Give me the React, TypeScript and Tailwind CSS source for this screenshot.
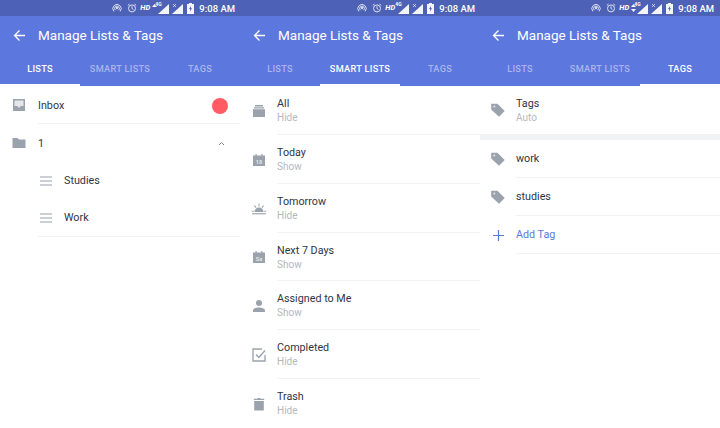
import { ReactNode } from 'react';

const tabs = ['LISTS', 'SMART LISTS', 'TAGS'];

type Arrows = 'up' | 'both' | 'none';

function Icon({ children, size = 16 }: { children: ReactNode; size?: number }) {
  return (
    <svg width={size} height={size} viewBox="0 0 16 16" fill="#9aa2ad" className="shrink-0">
      {children}
    </svg>
  );
}

function Slot({ children }: { children: ReactNode }) {
  return <div className="w-[16px] shrink-0 flex justify-center">{children}</div>;
}

const InboxIcon = () => (
  <Icon>
    <path d="M2 2h12v12H2z" />
    <path d="M3.500 3.500h9v5.500h-2.600L8 11 6.100 9H3.500z" fill="#e4e6ea" />
  </Icon>
);
const FolderIcon = () => (
  <Icon>
    <path d="M1.500 3h5l1.500 1.600h6.500V13h-13z" />
  </Icon>
);
const MenuIcon = () => (
  <svg width="14" height="12" viewBox="0 0 14 12" className="shrink-0" stroke="#9aa2ad" strokeWidth="1.2">
    <path d="M1 2h12M1 6h12M1 10h12" />
  </svg>
);
const AllIcon = () => (
  <Icon>
    <path d="M4 2h8v1.400H4zM3 4.200h10v1.300H3zM2 6.300h12V14H2z" />
  </Icon>
);
const CalIcon = ({ label }: { label: string }) => (
  <Icon>
    <path d="M2 3.500h2.500V2h1.200v1.500h4.600V2h1.200v1.500H14V14H2z" />
    <text x="8" y="11.500" textAnchor="middle" fontSize="5.500" fill="#e4e6ea" fontFamily="Roboto, sans-serif" fontWeight="700">
      {label}
    </text>
  </Icon>
);
const SunIcon = () => (
  <Icon>
    <path d="M3.500 11a4.500 4.500 0 0 1 9 0z" />
    <path d="M1 12.200h14v1.100H1z" />
    <path d="M7.500 2.500h1v3h-1zM3 5l.8-.7 1.700 1.900-.8.7zM13 5l-.8-.7-1.700 1.900.8.7zM.8 9.700h2v1h-2zM13.200 9.700h2v1h-2z" />
  </Icon>
);
const PersonIcon = () => (
  <Icon>
    <circle cx="8" cy="5" r="3" />
    <path d="M2 14v-1.600C2 10.400 5.500 9.400 8 9.400s6 1 6 3V14z" />
  </Icon>
);
const CheckIcon = () => (
  <svg width="16" height="16" viewBox="0 0 16 16" fill="none" stroke="#9aa2ad" strokeWidth="1.300" className="shrink-0">
    <path d="M14 8v6H2V2h9" />
    <path d="M5 7.500l2.800 3L14 3.500" />
  </svg>
);
const TrashIcon = () => (
  <Icon>
    <path d="M3.200 5h9.600v9.500H3.200zM2.800 2.800h3.400l.7-.8h2.200l.7.8h3.400v1.200H2.800z" />
  </Icon>
);
const TagIcon = () => (
  <Icon>
    <path d="M1.500 2.500h6.200L15 9.800 9.300 15.500 1.500 8.200z" transform="translate(-0.300 -0.800)" />
    <circle cx="4.300" cy="4.400" r="1" fill="#e4e6ea" />
  </Icon>
);
const PlusIcon = () => (
  <svg width="11" height="11" viewBox="0 0 11 11" stroke="#5c77dd" strokeWidth="1.200" className="shrink-0">
    <path d="M5.500 0v11M0 5.500h11" />
  </svg>
);

function StatusBar({ arrows, right }: { arrows: Arrows; right: string }) {
  return (
    <div className={`h-[16px] bg-[#4d62b6] flex items-center justify-end text-white ${right}`}>
      <svg width="10" height="10" viewBox="0 0 12 12" fill="none" stroke="#e8ebf7" strokeWidth="1.100">
        <path d="M2.200 10a5 5 0 1 1 7.600 0M3.900 8.600a2.900 2.900 0 1 1 4.200 0" />
        <circle cx="6" cy="6" r="1" fill="#e8ebf7" />
      </svg>
      <svg width="10" height="10" viewBox="0 0 12 12" fill="none" stroke="#e8ebf7" strokeWidth="1.100" className="ml-[5px]">
        <circle cx="6" cy="6.500" r="4.200" />
        <path d="M6 4v2.700l1.700 1M1 2.800l2-1.600M11 2.800L9 1.200" />
      </svg>
      <span className="ml-[3px] w-[10px] text-[7.500px] font-bold italic leading-none">HD</span>
      {arrows === 'none' ? (
        <span className="w-[3px]" />
      ) : (
        <span className="w-[8px] pl-[2px] flex">
          <svg width="5" height="8" viewBox="0 0 5 8" fill="#f4f5fb">
            <path d="M2.500 0L5 3H0z" />
            {arrows === 'both' && <path d="M2.500 8L0 5h5z" />}
          </svg>
        </span>
      )}
      <div className="relative">
        <svg width="11" height="11" viewBox="0 0 11 11" fill="#f4f5fb" className="block">
          <path d="M11 1v10H0z" />
        </svg>
        <span className="absolute left-[-3px] top-[-1px] text-[5px] font-bold leading-none">4G</span>
      </div>
      <svg width="11" height="11" viewBox="0 0 11 11" fill="#f4f5fb" className="ml-[3px]">
        <path d="M11 1v10H0z" />
        <path d="M1 1l3 3M4 1L1 4" stroke="#f4f5fb" strokeWidth="0.700" />
      </svg>
      <svg width="7" height="11" viewBox="0 0 7 11" className="ml-[4px]">
        <path d="M2 0h3v1h2v10H0V1h2z" fill="#f4f5fb" />
        <path d="M4 3L2 6h1.200L3 8.500 5 5.200H3.800z" fill="#4d62b6" />
      </svg>
      <span className="ml-[5px] pt-[1px] text-[9.500px] font-medium leading-none">9:08 AM</span>
    </div>
  );
}

function Header({ active, arrows, inset, right }: { active: number; arrows: Arrows; inset: string; right: string }) {
  return (
    <div className="bg-[#5c77dd] shrink-0">
      <StatusBar arrows={arrows} right={right} />
      <div className={`h-[38px] flex items-center pt-[1px] text-white ${inset}`}>
        <svg width="13" height="13" viewBox="0 0 13 13" fill="none" stroke="#ffffff" strokeWidth="1.300">
          <path d="M12 6.500H1.500M6.500 1.500l-5 5 5 5" />
        </svg>
        <span className="ml-[12px] text-[13.5px] leading-none">Manage Lists &amp; Tags</span>
      </div>
      <div className="flex h-[32px]">
        {tabs.map((tab, i) => (
          <div
            key={tab}
            className={`flex-1 flex items-center justify-center border-b-[2px] text-[9.2px] font-medium tracking-[0.3px] ${
              i === active ? 'text-white border-white' : 'text-[#a9b6ec] border-transparent'
            }`}
          >
            {tab}
          </div>
        ))}
      </div>
    </div>
  );
}

function Row({ icon, title, sub, height, last }: { icon: ReactNode; title: string; sub: string; height: string; last?: boolean }) {
  return (
    <div className={`flex items-center pl-[11px] ${height}`}>
      <Slot>{icon}</Slot>
      <div className={`ml-[10px] flex-1 h-full pt-[11px] ${last ? '' : 'border-b border-[#f1f2f4]'}`}>
        <div className="text-[10.75px] leading-[13px] text-[#2f3645]">{title}</div>
        <div className="text-[10px] leading-[13px] mt-px text-[#b4b8bf]">{sub}</div>
      </div>
    </div>
  );
}

function TagRow({ icon, title, blue }: { icon: ReactNode; title: string; blue?: boolean }) {
  return (
    <div className="h-[38px] flex items-center pl-[10px]">
      <Slot>{icon}</Slot>
      <div
        className={`ml-[10px] flex-1 h-full flex items-center border-b border-[#f1f2f4] pt-[1px] text-[10.75px] ${
          blue ? 'text-[#5c77dd]' : 'text-[#2f3645]'
        }`}
      >
        {title}
      </div>
    </div>
  );
}

export default function App() {
  const smart = [
    { icon: <AllIcon />, title: 'All', sub: 'Hide' },
    { icon: <CalIcon label="18" />, title: 'Today', sub: 'Show' },
    { icon: <SunIcon />, title: 'Tomorrow', sub: 'Hide' },
    { icon: <CalIcon label="Sa" />, title: 'Next 7 Days', sub: 'Show' },
    { icon: <PersonIcon />, title: 'Assigned to Me', sub: 'Show' },
    { icon: <CheckIcon />, title: 'Completed', sub: 'Hide' },
    { icon: <TrashIcon />, title: 'Trash', sub: 'Hide' },
  ];

  return (
    <div className="w-[720px] h-[428px] flex overflow-hidden bg-white font-['Roboto',sans-serif]">
      {/* Lists */}
      <div className="w-[240px] flex flex-col">
        <Header active={0} arrows="up" inset="pl-[13px]" right="pr-[5px]" />
        <div>
          <div className="h-[38px] flex items-center pl-[11px]">
            <Slot>
              <InboxIcon />
            </Slot>
            <div className="ml-[11px] pr-[12px] flex-1 h-full flex items-center justify-between border-b border-[#f1f2f4] text-[10.75px] text-[#2f3645]">
              <span className="pt-[4px]">Inbox</span>
              <span className="w-[16px] h-[16px] mt-[2px] rounded-full bg-[#ff5c63]" />
            </div>
          </div>
          <div className="h-[38px] flex items-center pl-[11px] pr-[15px] text-[10.75px] text-[#2f3645]">
            <Slot>
              <FolderIcon />
            </Slot>
            <span className="ml-[11px] flex-1 pt-[2px]">1</span>
            <svg width="7" height="5" viewBox="0 0 7 5" fill="none" stroke="#7b828c" strokeWidth="1">
              <path d="M1 4l2.500-2.500L6 4" />
            </svg>
          </div>
          {['Studies', 'Work'].map((name, i) => (
            <div
              key={name}
              className={`ml-[38px] pl-[1px] flex items-center ${i === 1 ? 'h-[38px] border-b border-[#f1f2f4]' : 'h-[37px]'}`}
            >
              <MenuIcon />
              <span className="ml-[11px] pt-[1px] text-[10.75px] text-[#2f3645]">{name}</span>
            </div>
          ))}
        </div>
      </div>

      {/* Smart lists */}
      <div className="w-[240px] flex flex-col">
        <Header active={1} arrows="none" inset="pl-[13px]" right="pr-[5px]" />
        <div>
          {smart.map((item, i) => (
            <Row
              key={item.title}
              icon={item.icon}
              title={item.title}
              sub={item.sub}
              height={i === 3 ? 'h-[48px]' : 'h-[49px]'}
              last={i === smart.length - 1}
            />
          ))}
        </div>
      </div>

      {/* Tags */}
      <div className="w-[240px] flex flex-col">
        <Header active={2} arrows="both" inset="pl-[12px]" right="pr-[6px]" />
        <div className="h-[48px] flex items-center pl-[10px]">
          <Slot>
            <TagIcon />
          </Slot>
          <div className="ml-[10px] pt-px">
            <div className="text-[10.75px] leading-[13px] text-[#2f3645]">Tags</div>
            <div className="text-[10px] leading-[13px] mt-px text-[#b4b8bf]">Auto</div>
          </div>
        </div>
        <div className="h-[6px] bg-[#f1f2f4]" />
        <TagRow icon={<TagIcon />} title="work" />
        <TagRow icon={<TagIcon />} title="studies" />
        <TagRow icon={<PlusIcon />} title="Add Tag" blue />
      </div>
    </div>
  );
}
